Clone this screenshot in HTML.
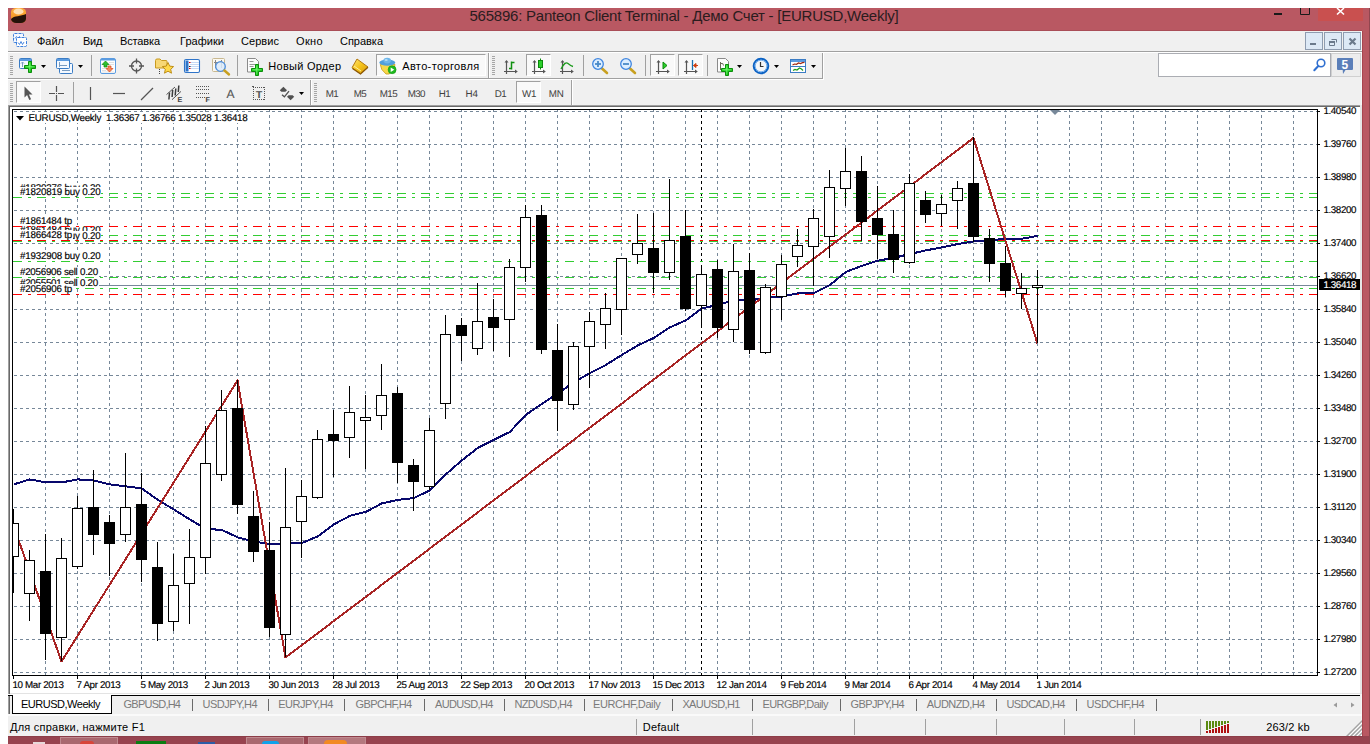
<!DOCTYPE html>
<html lang="ru"><head><meta charset="utf-8"><title>565896: Panteon Client Terminal - Демо Счет - [EURUSD,Weekly]</title><style>
html,body{margin:0;padding:0;background:#fff;}
body{width:1370px;height:744px;position:relative;overflow:hidden;font-family:"Liberation Sans",sans-serif;}
.t{position:absolute;white-space:pre;font-family:"Liberation Sans",sans-serif;}
.r{position:absolute;}
svg{position:absolute;left:0;top:0;}
</style></head>
<body>
<div class="r" style="left:8px;top:8px;width:1362px;height:736px;background:#b95862;"></div>
<div class="r" style="left:8px;top:30px;width:1354px;height:1px;background:#a94d57;"></div>
<div class="r" style="left:8px;top:736px;width:1362px;height:8px;background:#97434f;"></div>
<div class="r" style="left:60px;top:737px;width:58px;height:7px;background:#a9686f;box-sizing:border-box;border:1px solid #c08a90;border-bottom:none;"></div>
<div class="r" style="left:246px;top:737px;width:58px;height:7px;background:#a9686f;box-sizing:border-box;border:1px solid #c08a90;border-bottom:none;"></div>
<div class="r" style="left:308px;top:737px;width:58px;height:7px;background:#b4787e;box-sizing:border-box;border:1px solid #c08a90;border-bottom:none;"></div>
<div class="r" style="left:80px;top:741px;width:14px;height:3px;background:#d8453a;border-radius:6px 6px 0 0;"></div>
<div class="r" style="left:136px;top:741px;width:30px;height:3px;background:#0b7d12;"></div>
<div class="r" style="left:198px;top:742px;width:17px;height:2px;background:#2c5ca6;"></div>
<div class="r" style="left:262px;top:741px;width:17px;height:3px;background:#10a2ea;border-radius:6px 6px 0 0;"></div>
<div class="r" style="left:324px;top:740px;width:23px;height:4px;background:#f28a22;border-radius:9px 9px 0 0;"></div>
<div class="r" style="left:33px;top:742px;width:12px;height:2px;background:#e8d8da;"></div>
<div class="r" style="left:8px;top:31px;width:1354px;height:705px;background:#f0f0f0;"></div>
<div class="r" style="left:1361px;top:31px;width:1px;height:705px;background:#f6f6f6;"></div>
<div class="r" style="left:1362px;top:31px;width:1px;height:706px;background:#a9444f;"></div>
<div class="r" style="left:1369px;top:8px;width:1px;height:736px;background:#90464f;"></div>
<div class="r" style="left:8px;top:736px;width:1355px;height:1px;background:#8c3d48;"></div>
<div class="r" style="left:1318px;top:8px;width:45px;height:13px;background:#c9504f;"></div>
<span class="t" style="left:469.5px;top:7px;font-size:15px;line-height:18px;color:#2b1c1e;letter-spacing:-0.234px;">565896: Panteon Client Terminal - Демо Счет - [EURUSD,Weekly]</span>
<span class="t" style="left:37px;top:34px;font-size:11px;line-height:14px;color:#000;letter-spacing:-0.011px;">Файл</span>
<span class="t" style="left:83px;top:34px;font-size:11px;line-height:14px;color:#000;letter-spacing:-0.300px;">Вид</span>
<span class="t" style="left:120px;top:34px;font-size:11px;line-height:14px;color:#000;letter-spacing:-0.126px;">Вставка</span>
<span class="t" style="left:180px;top:34px;font-size:11px;line-height:14px;color:#000;letter-spacing:0.039px;">Графики</span>
<span class="t" style="left:241px;top:34px;font-size:11px;line-height:14px;color:#000;letter-spacing:0.055px;">Сервис</span>
<span class="t" style="left:296px;top:34px;font-size:11px;line-height:14px;color:#000;letter-spacing:0.360px;">Окно</span>
<span class="t" style="left:340px;top:34px;font-size:11px;line-height:14px;color:#000;letter-spacing:-0.022px;">Справка</span>
<div class="r" style="left:8px;top:51px;width:1354px;height:1px;background:#a0a0a0;"></div>
<div class="r" style="left:8px;top:52px;width:1354px;height:1px;background:#ffffff;"></div>
<div class="r" style="left:8px;top:78px;width:815px;height:1px;background:#a0a0a0;"></div>
<div class="r" style="left:8px;top:79px;width:815px;height:1px;background:#ffffff;"></div>
<div class="r" style="left:822px;top:53px;width:1px;height:26px;background:#a0a0a0;"></div>
<div class="r" style="left:823px;top:53px;width:1px;height:27px;background:#ffffff;"></div>
<div class="r" style="left:488px;top:53px;width:1px;height:25px;background:#a0a0a0;"></div>
<div class="r" style="left:489px;top:53px;width:1px;height:25px;background:#ffffff;"></div>
<div class="r" style="left:310px;top:80px;width:1px;height:25px;background:#a0a0a0;"></div>
<div class="r" style="left:311px;top:80px;width:1px;height:25px;background:#ffffff;"></div>
<div class="r" style="left:571px;top:80px;width:1px;height:25px;background:#a0a0a0;"></div>
<div class="r" style="left:572px;top:80px;width:1px;height:25px;background:#ffffff;"></div>
<div class="r" style="left:10px;top:56px;width:3px;height:1px;background:#a6a6a6;"></div><div class="r" style="left:10px;top:58px;width:3px;height:1px;background:#a6a6a6;"></div><div class="r" style="left:10px;top:60px;width:3px;height:1px;background:#a6a6a6;"></div><div class="r" style="left:10px;top:62px;width:3px;height:1px;background:#a6a6a6;"></div><div class="r" style="left:10px;top:64px;width:3px;height:1px;background:#a6a6a6;"></div><div class="r" style="left:10px;top:66px;width:3px;height:1px;background:#a6a6a6;"></div><div class="r" style="left:10px;top:68px;width:3px;height:1px;background:#a6a6a6;"></div><div class="r" style="left:10px;top:70px;width:3px;height:1px;background:#a6a6a6;"></div><div class="r" style="left:10px;top:72px;width:3px;height:1px;background:#a6a6a6;"></div><div class="r" style="left:10px;top:74px;width:3px;height:1px;background:#a6a6a6;"></div>
<div class="r" style="left:492px;top:56px;width:3px;height:1px;background:#a6a6a6;"></div><div class="r" style="left:492px;top:58px;width:3px;height:1px;background:#a6a6a6;"></div><div class="r" style="left:492px;top:60px;width:3px;height:1px;background:#a6a6a6;"></div><div class="r" style="left:492px;top:62px;width:3px;height:1px;background:#a6a6a6;"></div><div class="r" style="left:492px;top:64px;width:3px;height:1px;background:#a6a6a6;"></div><div class="r" style="left:492px;top:66px;width:3px;height:1px;background:#a6a6a6;"></div><div class="r" style="left:492px;top:68px;width:3px;height:1px;background:#a6a6a6;"></div><div class="r" style="left:492px;top:70px;width:3px;height:1px;background:#a6a6a6;"></div><div class="r" style="left:492px;top:72px;width:3px;height:1px;background:#a6a6a6;"></div><div class="r" style="left:492px;top:74px;width:3px;height:1px;background:#a6a6a6;"></div>
<div class="r" style="left:10px;top:83px;width:3px;height:1px;background:#a6a6a6;"></div><div class="r" style="left:10px;top:85px;width:3px;height:1px;background:#a6a6a6;"></div><div class="r" style="left:10px;top:87px;width:3px;height:1px;background:#a6a6a6;"></div><div class="r" style="left:10px;top:89px;width:3px;height:1px;background:#a6a6a6;"></div><div class="r" style="left:10px;top:91px;width:3px;height:1px;background:#a6a6a6;"></div><div class="r" style="left:10px;top:93px;width:3px;height:1px;background:#a6a6a6;"></div><div class="r" style="left:10px;top:95px;width:3px;height:1px;background:#a6a6a6;"></div><div class="r" style="left:10px;top:97px;width:3px;height:1px;background:#a6a6a6;"></div><div class="r" style="left:10px;top:99px;width:3px;height:1px;background:#a6a6a6;"></div><div class="r" style="left:10px;top:101px;width:3px;height:1px;background:#a6a6a6;"></div>
<div class="r" style="left:314px;top:83px;width:3px;height:1px;background:#a6a6a6;"></div><div class="r" style="left:314px;top:85px;width:3px;height:1px;background:#a6a6a6;"></div><div class="r" style="left:314px;top:87px;width:3px;height:1px;background:#a6a6a6;"></div><div class="r" style="left:314px;top:89px;width:3px;height:1px;background:#a6a6a6;"></div><div class="r" style="left:314px;top:91px;width:3px;height:1px;background:#a6a6a6;"></div><div class="r" style="left:314px;top:93px;width:3px;height:1px;background:#a6a6a6;"></div><div class="r" style="left:314px;top:95px;width:3px;height:1px;background:#a6a6a6;"></div><div class="r" style="left:314px;top:97px;width:3px;height:1px;background:#a6a6a6;"></div><div class="r" style="left:314px;top:99px;width:3px;height:1px;background:#a6a6a6;"></div><div class="r" style="left:314px;top:101px;width:3px;height:1px;background:#a6a6a6;"></div>
<div class="r" style="left:91px;top:55px;width:1px;height:21px;background:#a0a0a0;"></div>
<div class="r" style="left:237px;top:55px;width:1px;height:21px;background:#a0a0a0;"></div>
<div class="r" style="left:583px;top:55px;width:1px;height:21px;background:#a0a0a0;"></div>
<div class="r" style="left:645px;top:55px;width:1px;height:21px;background:#a0a0a0;"></div>
<div class="r" style="left:707px;top:55px;width:1px;height:21px;background:#a0a0a0;"></div>
<div class="r" style="left:73px;top:82px;width:1px;height:21px;background:#a0a0a0;"></div>
<div class="r" style="left:376px;top:54px;width:110px;height:22px;background:#f9f9f9;box-sizing:border-box;border:1px solid #fff;border-top-color:#a0a0a0;border-left-color:#a0a0a0;"></div>
<div class="r" style="left:526px;top:54px;width:25px;height:22px;background:#f9f9f9;box-sizing:border-box;border:1px solid #fff;border-top-color:#a0a0a0;border-left-color:#a0a0a0;"></div>
<div class="r" style="left:650px;top:54px;width:25px;height:22px;background:#f9f9f9;box-sizing:border-box;border:1px solid #fff;border-top-color:#a0a0a0;border-left-color:#a0a0a0;"></div>
<div class="r" style="left:678px;top:54px;width:25px;height:22px;background:#f9f9f9;box-sizing:border-box;border:1px solid #fff;border-top-color:#a0a0a0;border-left-color:#a0a0a0;"></div>
<div class="r" style="left:16px;top:81px;width:25px;height:22px;background:#f9f9f9;box-sizing:border-box;border:1px solid #fff;border-top-color:#a0a0a0;border-left-color:#a0a0a0;"></div>
<div class="r" style="left:516px;top:81px;width:25px;height:22px;background:#f9f9f9;box-sizing:border-box;border:1px solid #fff;border-top-color:#a0a0a0;border-left-color:#a0a0a0;"></div>
<span class="t" style="left:268.3px;top:59px;font-size:11px;line-height:14px;color:#000;letter-spacing:0.265px;">Новый Ордер</span>
<span class="t" style="left:402.2px;top:59px;font-size:11px;line-height:14px;color:#000;letter-spacing:0.366px;">Авто-торговля</span>
<span class="t" style="left:325.7px;top:89px;font-size:9.8px;line-height:12px;color:#404040;letter-spacing:-0.657px;text-rendering:geometricPrecision;">M1</span>
<span class="t" style="left:353.7px;top:89px;font-size:9.8px;line-height:12px;color:#404040;letter-spacing:-0.507px;text-rendering:geometricPrecision;">M5</span>
<span class="t" style="left:379.7px;top:89px;font-size:9.8px;line-height:12px;color:#404040;letter-spacing:-0.521px;text-rendering:geometricPrecision;">M15</span>
<span class="t" style="left:407.7px;top:89px;font-size:9.8px;line-height:12px;color:#404040;letter-spacing:-0.588px;text-rendering:geometricPrecision;">M30</span>
<span class="t" style="left:438.8px;top:89px;font-size:9.8px;line-height:12px;color:#404040;letter-spacing:-0.664px;text-rendering:geometricPrecision;">H1</span>
<span class="t" style="left:465.6px;top:89px;font-size:9.8px;line-height:12px;color:#404040;letter-spacing:-0.064px;text-rendering:geometricPrecision;">H4</span>
<span class="t" style="left:494.7px;top:89px;font-size:9.8px;line-height:12px;color:#404040;letter-spacing:-0.614px;text-rendering:geometricPrecision;">D1</span>
<span class="t" style="left:522px;top:89px;font-size:9.8px;line-height:12px;color:#404040;letter-spacing:-0.350px;text-rendering:geometricPrecision;">W1</span>
<span class="t" style="left:548.8px;top:89px;font-size:9.8px;line-height:12px;color:#404040;letter-spacing:-0.320px;text-rendering:geometricPrecision;">MN</span>
<div class="r" style="left:1158px;top:53px;width:173px;height:24px;background:#fff;box-sizing:border-box;border:1px solid #abadb3;"></div>
<div class="r" style="left:1331px;top:53px;width:30px;height:24px;background:#ededed;box-sizing:border-box;border:1px solid #d0d0d0;"></div>
<div class="r" style="left:1305px;top:32px;width:18px;height:18px;background:#dde9f6;box-sizing:border-box;border:1px solid #8e9cb0;"></div>
<div class="r" style="left:1324px;top:32px;width:18px;height:18px;background:#dde9f6;box-sizing:border-box;border:1px solid #8e9cb0;"></div>
<div class="r" style="left:1343px;top:32px;width:18px;height:18px;background:#dde9f6;box-sizing:border-box;border:1px solid #8e9cb0;"></div>
<div class="r" style="left:8px;top:105px;width:1354px;height:1px;background:#a0a0a0;"></div>
<div class="r" style="left:8px;top:106px;width:1354px;height:1px;background:#696969;"></div>
<div class="r" style="left:8px;top:107px;width:1352px;height:587px;background:#ffffff;"></div>
<div class="r" style="left:1360px;top:105px;width:2px;height:589px;background:#e6e6e6;"></div>
<div class="r" style="left:8px;top:693px;width:1354px;height:1px;background:#e3e3e3;"></div>
<div class="r" style="left:8px;top:105px;width:1px;height:610px;background:#a0a0a0;"></div>
<div class="r" style="left:9px;top:106px;width:1px;height:609px;background:#696969;"></div>
<div class="r" style="left:8px;top:694px;width:1352px;height:1px;background:#fff;"></div>
<div class="r" style="left:8px;top:714px;width:1354px;height:2px;background:#fafafa;"></div>
<div class="r" style="left:8px;top:695px;width:1352px;height:1px;background:#000;"></div>
<div class="r" style="left:12px;top:695px;width:100px;height:19px;background:#fff;border:1px solid #000;border-top:none;box-sizing:border-box;"></div>
<span class="t" style="left:21px;top:697px;font-size:11px;line-height:14px;color:#000;letter-spacing:-0.490px;">EURUSD,Weekly</span>
<span class="t" style="left:123.6px;top:697px;font-size:11px;line-height:14px;color:#7a7a7a;letter-spacing:-0.775px;">GBPUSD,H4</span>
<span class="t" style="left:202.5px;top:697px;font-size:11px;line-height:14px;color:#7a7a7a;letter-spacing:-0.511px;">USDJPY,H4</span>
<span class="t" style="left:278.2px;top:697px;font-size:11px;line-height:14px;color:#7a7a7a;letter-spacing:-0.500px;">EURJPY,H4</span>
<span class="t" style="left:355.6px;top:697px;font-size:11px;line-height:14px;color:#7a7a7a;letter-spacing:-0.648px;">GBPCHF,H4</span>
<span class="t" style="left:435px;top:697px;font-size:11px;line-height:14px;color:#7a7a7a;letter-spacing:-0.641px;">AUDUSD,H4</span>
<span class="t" style="left:514.4px;top:697px;font-size:11px;line-height:14px;color:#7a7a7a;letter-spacing:-0.594px;">NZDUSD,H4</span>
<span class="t" style="left:593px;top:697px;font-size:11px;line-height:14px;color:#7a7a7a;letter-spacing:-0.402px;">EURCHF,Daily</span>
<span class="t" style="left:682.4px;top:697px;font-size:11px;line-height:14px;color:#7a7a7a;letter-spacing:-0.618px;">XAUUSD,H1</span>
<span class="t" style="left:762.5px;top:697px;font-size:11px;line-height:14px;color:#7a7a7a;letter-spacing:-0.604px;">EURGBP,Daily</span>
<span class="t" style="left:850.6px;top:697px;font-size:11px;line-height:14px;color:#7a7a7a;letter-spacing:-0.634px;">GBPJPY,H4</span>
<span class="t" style="left:926.8px;top:697px;font-size:11px;line-height:14px;color:#7a7a7a;letter-spacing:-0.572px;">AUDNZD,H4</span>
<span class="t" style="left:1006.5px;top:697px;font-size:11px;line-height:14px;color:#7a7a7a;letter-spacing:-0.585px;">USDCAD,H4</span>
<span class="t" style="left:1086.6px;top:697px;font-size:11px;line-height:14px;color:#7a7a7a;letter-spacing:-0.459px;">USDCHF,H4</span>
<div class="r" style="left:192px;top:699px;width:1px;height:12px;background:#6a6a6a;"></div>
<div class="r" style="left:268px;top:699px;width:1px;height:12px;background:#6a6a6a;"></div>
<div class="r" style="left:344px;top:699px;width:1px;height:12px;background:#6a6a6a;"></div>
<div class="r" style="left:424px;top:699px;width:1px;height:12px;background:#6a6a6a;"></div>
<div class="r" style="left:504px;top:699px;width:1px;height:12px;background:#6a6a6a;"></div>
<div class="r" style="left:584px;top:699px;width:1px;height:12px;background:#6a6a6a;"></div>
<div class="r" style="left:672px;top:699px;width:1px;height:12px;background:#6a6a6a;"></div>
<div class="r" style="left:752px;top:699px;width:1px;height:12px;background:#6a6a6a;"></div>
<div class="r" style="left:840px;top:699px;width:1px;height:12px;background:#6a6a6a;"></div>
<div class="r" style="left:916px;top:699px;width:1px;height:12px;background:#6a6a6a;"></div>
<div class="r" style="left:996px;top:699px;width:1px;height:12px;background:#6a6a6a;"></div>
<div class="r" style="left:1076px;top:699px;width:1px;height:12px;background:#6a6a6a;"></div>
<div class="r" style="left:1156px;top:699px;width:1px;height:12px;background:#6a6a6a;"></div>
<span class="t" style="left:10px;top:720px;font-size:11px;line-height:14px;color:#000;letter-spacing:0.232px;">Для справки, нажмите F1</span>
<span class="t" style="left:642.7px;top:720px;font-size:11px;line-height:14px;color:#000;letter-spacing:0.264px;">Default</span>
<span class="t" style="left:1266.3px;top:720px;font-size:11px;line-height:14px;color:#000;letter-spacing:0.150px;">263/2 kb</span>
<div class="r" style="left:636px;top:719px;width:1px;height:16px;background:#a0a0a0;"></div>
<div class="r" style="left:752px;top:719px;width:1px;height:16px;background:#a0a0a0;"></div>
<div class="r" style="left:854px;top:719px;width:1px;height:16px;background:#a0a0a0;"></div>
<div class="r" style="left:925px;top:719px;width:1px;height:16px;background:#a0a0a0;"></div>
<div class="r" style="left:996px;top:719px;width:1px;height:16px;background:#a0a0a0;"></div>
<div class="r" style="left:1064px;top:719px;width:1px;height:16px;background:#a0a0a0;"></div>
<div class="r" style="left:1134px;top:719px;width:1px;height:16px;background:#a0a0a0;"></div>
<div class="r" style="left:1200px;top:719px;width:1px;height:16px;background:#a0a0a0;"></div>
<svg width="1370" height="744" viewBox="0 0 1370 744" fill="none"><rect x="1274" y="13" width="8" height="2" fill="#1a1a1a"/><path d="M1300.5 8V14.5H1309.5V8" stroke="#1a1a1a" fill="none"/><path d="M1337 8L1344 14.5M1344 8L1337 14.5" stroke="#fff" stroke-width="1.6" fill="none"/><rect x="1310" y="43" width="6" height="2" fill="#6b7a8c"/><path d="M1331.5 39.5h5v3M1329.5 41.5h5v4h-5z" stroke="#6b7a8c" fill="none"/><rect x="1329" y="41" width="6" height="2" fill="#6b7a8c"/><path d="M1349.5 38.500l6 6M1355.5 38.500l-6 6" stroke="#6b7a8c" stroke-width="2.200" fill="none"/><defs><radialGradient id="pg" cx=".45" cy=".4" r=".7"><stop offset="0" stop-color="#48ee48"/><stop offset="1" stop-color="#0fb00f"/></radialGradient></defs><defs><linearGradient id="og" x1="0" y1="0" x2="0" y2="1"><stop offset="0" stop-color="#ffb13d"/><stop offset="1" stop-color="#f08a1c"/></linearGradient><clipPath id="ai"><rect x="11" y="8" width="15" height="15" rx="5" ry="4"/></clipPath></defs><g clip-path="url(#ai)"><rect x="11" y="8" width="15" height="15" fill="url(#og)"/><ellipse cx="18.5" cy="11.5" rx="5" ry="3" fill="#ffe1b5"/><path d="M11 19 C14 15.5 21 16.5 26 14 V24 H11Z" fill="#24120a"/></g><rect x="13.500" y="33.500" width="10" height="9" rx="1" fill="#f4f8ff" stroke="#3c7fdc" stroke-dasharray="3 1"/><path d="M15 38.500l1.500-2 1.500 2 1.500-2 1.500 2" stroke="#3c7fdc" fill="none" stroke-width=".9"/><rect x="16.500" y="37.500" width="10" height="9" rx="1" fill="#fff" stroke="#3c7fdc" stroke-dasharray="3 1"/><path d="M18 42.500l1.500 2 1.500-3 1.500 3 1.500-2.500" stroke="#3c7fdc" fill="none" stroke-width=".9"/><rect x="19.5" y="58.5" width="12" height="10" rx="1" fill="#f4f9ff" stroke="#3b7cc4"/><rect x="20" y="59" width="11" height="2" fill="#5b9be0"/><path d="M22.5 62v5M21 63.5l1.5-1.5 1.5 1.5" stroke="#7a9cc0" fill="none"/><path d="M28.5 61.5h3v4h4v3h-4v4h-3v-4h-4v-3h4z" fill="url(#pg)" stroke="#0b8f0b" stroke-width="1"/><path d="M29.5 62.5v9M25.5 66.5h9" stroke="#8dff8d" stroke-opacity=".35" stroke-width="1"/><path d="M41 65h5l-2.5 3z" fill="#000"/><rect x="59.5" y="63.5" width="13" height="10" rx="1" fill="#f4f9ff" stroke="#3b7cc4"/><rect x="56.5" y="58.5" width="13" height="10" rx="1" fill="#f4f9ff" stroke="#3b7cc4"/><rect x="57" y="59" width="12" height="2" fill="#5b9be0"/><path d="M59.500 62v5M59 65.500h8M62 70.500h8" stroke="#7a9cc0" fill="none"/><path d="M78 65h5l-2.5 3z" fill="#000"/><rect x="100.500" y="58.500" width="15" height="15" rx="1.500" fill="#fdfeff" stroke="#5b9be0"/><rect x="101" y="59" width="14" height="1.500" fill="#5b9be0"/><path d="M109 62.500h5M109 64.500h5M102 68.500h4M102 70.500h4M102 72h12" stroke="#e0e0e0"/><path d="M105.500 61l3.500 3.500h-2v2.500h-3v-2.500h-2z" fill="#2fc02f" stroke="#0c8a0c" stroke-width=".7"/><path d="M109.500 72l3.500-3.500h-2v-2.500h-3v2.500h-2z" fill="#f58a60" stroke="#d84818" stroke-width=".7"/><circle cx="136.500" cy="66" r="5" fill="none" stroke="#555" stroke-width="1.3"/><path d="M129 66h5M139 66h5M136.500 58.500v5M136.500 68.500v5" stroke="#555" stroke-width="1.3"/><path d="M155.500 60.500q0-1.500 1.500-1.500h3l1.500 1.500h4.500q1 0 1 1v6.500h-11.500z" fill="#f7d774" stroke="#c99a1e"/><path d="M168 62.500l1.700 3.600 3.900.5-2.900 2.700.8 3.900-3.500-2-3.500 2 .8-3.900-2.900-2.700 3.900-.5z" fill="#ffd94a" stroke="#b8860b" stroke-width=".9"/><path d="M159.500 69v5" stroke="#444" stroke-dasharray="1 1"/><rect x="184.500" y="59.500" width="15" height="13" rx="1.500" fill="#fff" stroke="#2f74c8" stroke-width="1.100"/><rect x="185.500" y="60.500" width="3" height="11" fill="#2f74c8"/><path d="M190 62.500h9M190 64.500h9M190 66.500h9M190 68.500h9" stroke="#c5d9f5"/><rect x="189" y="62" width="1.500" height="1" fill="#e00"/><rect x="189" y="66" width="1.500" height="1" fill="#222"/><rect x="189" y="68" width="1.500" height="1" fill="#e00"/><rect x="212.500" y="58.500" width="12" height="13" rx="1" fill="#fbf8f0" stroke="#c8b890"/><path d="M215.500 60v8M221.500 60v8M214 62.500h9" stroke="#888" fill="none"/><circle cx="220.500" cy="66.500" r="4.800" fill="#dcebfa" fill-opacity=".85" stroke="#4f8fdc" stroke-width="1.300"/><path d="M224.500 70.500l4.500 4" stroke="#c8a020" stroke-width="2.400" stroke-linecap="round"/><path d="M247.500 58.500h8l3 3v10.500h-11z" fill="#fcfcfc" stroke="#8a8a8a"/><path d="M249.500 61.500h4M249.500 64.500h6M249.500 66.500h4" stroke="#999"/><path d="M255.5 64.5h3v4h4v3h-4v4h-3v-4h-4v-3h4z" fill="url(#pg)" stroke="#0b8f0b" stroke-width="1"/><path d="M256.5 65.5v9M252.5 69.5h9" stroke="#8dff8d" stroke-opacity=".35" stroke-width="1"/><defs><linearGradient id="bk" x1="0" y1="0" x2="1" y2="1"><stop offset="0" stop-color="#ffe779"/><stop offset=".5" stop-color="#f4c21a"/><stop offset="1" stop-color="#d89a0c"/></linearGradient></defs><path d="M357 59l11 8-7.500 6.700-8.500-6z" fill="url(#bk)" stroke="#b3780e" stroke-width="1"/><path d="M352.500 68.500l8 5.500 7.500-6.700" stroke="#8f5a06" fill="none" stroke-width="1.300"/><path d="M354 66l7 5" stroke="#ffef9a" fill="none" stroke-width="1"/><path d="M380.300 64.500h14.700l-1.500 6-4.500 3.500h-3l-4.200-4.500z" fill="#f6d84a" stroke="#c89a18" stroke-width=".8"/><ellipse cx="387.300" cy="62.600" rx="8" ry="3.100" fill="#4f9fdc"/><ellipse cx="387.200" cy="60.600" rx="3.800" ry="2.800" fill="#6db6ea"/><ellipse cx="386.200" cy="60" rx="1.600" ry="1" fill="#b5dcf7"/><circle cx="392.100" cy="69.700" r="4" fill="#1fb81f" stroke="#0f9a0f" stroke-width=".6"/><path d="M390.700 67.400l3.600 2.300-3.600 2.300z" fill="#fff"/><path d="M506.5 61v13M504 71.5h13" stroke="#555" stroke-width="1.200" fill="none"/><path d="M504.5 62.5l2-2.500 2 2.500zM515 69.5l2.800 2-2.800 2z" fill="#555"/><path d="M511.500 61.500v8M511.500 62.500h3M509 68.500h2.500" stroke="#0f900f" stroke-width="1.500" fill="none"/><path d="M534.5 61v13M532 71.5h13" stroke="#555" stroke-width="1.200" fill="none"/><path d="M532.5 62.5l2-2.500 2 2.500zM543 69.5l2.800 2-2.800 2z" fill="#555"/><path d="M540.500 58.500v11" stroke="#0c8a0c"/><rect x="538.500" y="60.500" width="4" height="7" fill="#2bd02b" stroke="#0c8a0c"/><path d="M562.5 61v13M560 71.5h13" stroke="#555" stroke-width="1.200" fill="none"/><path d="M560.5 62.5l2-2.500 2 2.500zM571 69.5l2.800 2-2.800 2z" fill="#555"/><path d="M561 69q4-8 7-5.500t5 3" stroke="#1a9a1a" stroke-width="1.300" fill="none"/><path d="M602 68.5l5 4.500" stroke="#c8a020" stroke-width="2.600" stroke-linecap="round"/><circle cx="598" cy="64" r="5.300" fill="#ddeeff" stroke="#3f86e0" stroke-width="1.300"/><path d="M595 64h6" stroke="#4a8ac8" stroke-width="1.800"/><path d="M598 61v6" stroke="#4a8ac8" stroke-width="1.800"/><path d="M630 68.5l5 4.500" stroke="#c8a020" stroke-width="2.600" stroke-linecap="round"/><circle cx="626" cy="64" r="5.300" fill="#ddeeff" stroke="#3f86e0" stroke-width="1.300"/><path d="M623 64h6" stroke="#4a8ac8" stroke-width="1.800"/><path d="M658.5 61v13M656 71.5h13" stroke="#555" stroke-width="1.200" fill="none"/><path d="M656.5 62.5l2-2.500 2 2.500zM667 69.5l2.800 2-2.800 2z" fill="#555"/><path d="M663 62l4 3.500-4 3.500z" fill="#2bd02b" stroke="#0c8a0c"/><path d="M686.5 61v13M684 71.5h13" stroke="#555" stroke-width="1.200" fill="none"/><path d="M684.5 62.5l2-2.500 2 2.500zM695 69.5l2.800 2-2.800 2z" fill="#555"/><path d="M692.500 60v10" stroke="#1a70b0" stroke-width="1.300"/><path d="M698 65.500h-4.500M696 63.500l-2.500 2 2.500 2z" stroke="#d04010" fill="#d04010" stroke-width="1"/><path d="M717.500 58.500h8l3 3v10.500h-11z" fill="#fcfcfc" stroke="#8a8a8a"/><path d="M720.500 62v8M720.500 63.500q3-1 3 2" stroke="#6a6a5a" fill="none"/><path d="M725.5 64.5h3v4h4v3h-4v4h-3v-4h-4v-3h4z" fill="url(#pg)" stroke="#0b8f0b" stroke-width="1"/><path d="M726.5 65.5v9M722.5 69.5h9" stroke="#8dff8d" stroke-opacity=".35" stroke-width="1"/><path d="M737 65h5l-2.5 3z" fill="#000"/><circle cx="761" cy="66" r="7.300" fill="#f4f6f8" stroke="#0b62c4" stroke-width="2"/><circle cx="761" cy="66" r="5.800" fill="none" stroke="#57a0ee" stroke-width=".8"/><path d="M760.500 62v4.500h3" stroke="#333" fill="none" stroke-width="1.200"/><path d="M774 65h5l-2.5 3z" fill="#000"/><rect x="790.500" y="59.500" width="15" height="13" fill="#fff" stroke="#3b7cc4"/><rect x="791" y="60" width="14" height="2" fill="#5b9be0"/><path d="M791 66.500h14" stroke="#3b7cc4"/><path d="M792.500 65l2-1 2 .3 2-1.300 2 .6 2-1 2-.3" stroke="#a02810" fill="none" stroke-width="1.200"/><path d="M793 70.500l2-1 2 .5 2.500-2 2 1 1.500 1.500" stroke="#1a9a1a" fill="none" stroke-width="1.200"/><path d="M811 65h5l-2.5 3z" fill="#000"/><circle cx="1321" cy="63" r="3.800" fill="none" stroke="#2f6fd0" stroke-width="1.600"/><path d="M1318.300 66l-4 4.300" stroke="#2f6fd0" stroke-width="2" stroke-linecap="round"/><path d="M1338 58h14q1 0 1 1v10q0 1-1 1h-6.500l-2.500 4-.300-4h-4.700q-1 0-1-1v-10q0-1 1-1z" fill="#5b7fb9"/><path d="M24.500 86.500v11l2.600-2.500 2.200 5 1.800-.800-2.200-4.800h3.600z" fill="#555"/><path d="M49 93.500h6M58 93.500h6M56.500 86v6M56.500 95v6" stroke="#555" stroke-width="1.200"/><rect x="56" y="93" width="1" height="1" fill="#555"/><path d="M90.500 87v13" stroke="#555" stroke-width="1.200"/><path d="M113 93.500h12" stroke="#555" stroke-width="1.200"/><path d="M141 100l12-12" stroke="#555" stroke-width="1.200"/><path d="M166.500 94.600l8.500-7.600M172 99.700l9-8.300" stroke="#555" fill="none" stroke-width="1"/><path d="M169.500 92.500l-.6 7M172.700 90l-.6 7M175.800 88.500l-.6 7M178.800 85.500l-.5 6.500" stroke="#3c3c3c" fill="none" stroke-width="1.500"/><path d="M196 86.5h13" stroke="#555" stroke-dasharray="1 1"/><path d="M196 89.5h13" stroke="#555" stroke-dasharray="1 1"/><path d="M196 93.5h13" stroke="#555" stroke-dasharray="1 1"/><path d="M196 97.5h9" stroke="#555" stroke-dasharray="1 1"/><g shape-rendering="crispEdges"><path d="M253 87.500h12M253 99.500h12M253.500 87v13M264.500 87v13" stroke="#555" stroke-dasharray="1 1"/><rect x="252" y="86" width="2" height="1" fill="#555"/></g><path d="M283.400 86.800l3.600 3.400-1.600 1.600h-4l-1.600-1.600z" fill="#505050"/><path d="M290.600 100.200l3.600-3.400-1.600-1.600h-4l-1.600 1.600z" fill="#505050"/><path d="M282 94.800l2.400 2 4.600-5.600" stroke="#505050" fill="none" stroke-width="1.300"/><path d="M299 92h5l-2.5 3z" fill="#000"/><path d="M1337 702.500v5l-3.500-2.500zM1351 702.500v5l3.500-2.500z" fill="#9a9a9a"/><rect x="1206" y="731" width="2" height="2" fill="#b01010"/><rect x="1206" y="721" width="2" height="9" fill="#5a8a10"/><rect x="1209" y="730" width="2" height="3" fill="#b01010"/><rect x="1209" y="721" width="2" height="8" fill="#5a8a10"/><rect x="1212" y="729" width="2" height="4" fill="#b01010"/><rect x="1212" y="721" width="2" height="7" fill="#5a8a10"/><rect x="1215" y="728" width="2" height="5" fill="#b01010"/><rect x="1215" y="721" width="2" height="6" fill="#5a8a10"/><rect x="1218" y="727" width="2" height="6" fill="#b01010"/><rect x="1218" y="721" width="2" height="5" fill="#5a8a10"/><rect x="1221" y="726" width="2" height="7" fill="#b01010"/><rect x="1221" y="721" width="2" height="4" fill="#5a8a10"/><rect x="1224" y="725" width="2" height="8" fill="#b01010"/><rect x="1224" y="721" width="2" height="3" fill="#5a8a10"/><rect x="1227" y="724" width="2" height="9" fill="#b01010"/><rect x="1227" y="721" width="2" height="2" fill="#5a8a10"/><clipPath id="rg"><rect x="1346" y="718" width="16" height="18"/></clipPath><g clip-path="url(#rg)"><path d="M1348 737L1363 722" stroke="#fff" stroke-width="1.500"/><path d="M1352 737L1363 726" stroke="#fff" stroke-width="1.500"/><path d="M1356 737L1363 730" stroke="#fff" stroke-width="1.500"/><path d="M1360 737L1363 734" stroke="#fff" stroke-width="1.500"/><path d="M1346 737L1363 720" stroke="#a3a3a3" stroke-width="1.500"/><path d="M1350 737L1363 724" stroke="#a3a3a3" stroke-width="1.500"/><path d="M1354 737L1363 728" stroke="#a3a3a3" stroke-width="1.500"/><path d="M1358 737L1363 732" stroke="#a3a3a3" stroke-width="1.500"/></g></svg>
<span class="t" style="left:177.5px;top:96px;font-size:7px;line-height:9px;color:#444;font-weight:bold;text-rendering:geometricPrecision;-webkit-text-stroke:0.15px #444;">E</span>
<span class="t" style="left:205.5px;top:96px;font-size:7px;line-height:9px;color:#444;font-weight:bold;text-rendering:geometricPrecision;-webkit-text-stroke:0.15px #444;">F</span>
<span class="t" style="left:226.5px;top:87px;font-size:12px;line-height:15px;color:#555;text-rendering:geometricPrecision;-webkit-text-stroke:0.15px #555;">A</span>
<span class="t" style="left:256px;top:90px;font-size:10px;line-height:12px;color:#555;font-weight:bold;text-rendering:geometricPrecision;-webkit-text-stroke:0.15px #555;">T</span>
<span class="t" style="left:1341.5px;top:58px;font-size:12px;line-height:15px;color:#fff;font-weight:bold;">5</span>
<svg width="1370" height="744" viewBox="0 0 1370 744" shape-rendering="crispEdges" fill="none"><path d="M14 111.5H1317" stroke="#778899" stroke-dasharray="3 3" stroke-dashoffset="0"/><path d="M14 144.5H1317" stroke="#778899" stroke-dasharray="3 3" stroke-dashoffset="0"/><path d="M14 177.5H1317" stroke="#778899" stroke-dasharray="3 3" stroke-dashoffset="0"/><path d="M14 210.5H1317" stroke="#778899" stroke-dasharray="3 3" stroke-dashoffset="0"/><path d="M14 243.5H1317" stroke="#778899" stroke-dasharray="3 3" stroke-dashoffset="0"/><path d="M14 276.5H1317" stroke="#778899" stroke-dasharray="3 3" stroke-dashoffset="0"/><path d="M14 309.5H1317" stroke="#778899" stroke-dasharray="3 3" stroke-dashoffset="0"/><path d="M14 342.5H1317" stroke="#778899" stroke-dasharray="3 3" stroke-dashoffset="0"/><path d="M14 375.5H1317" stroke="#778899" stroke-dasharray="3 3" stroke-dashoffset="0"/><path d="M14 408.5H1317" stroke="#778899" stroke-dasharray="3 3" stroke-dashoffset="0"/><path d="M14 441.5H1317" stroke="#778899" stroke-dasharray="3 3" stroke-dashoffset="0"/><path d="M14 474.5H1317" stroke="#778899" stroke-dasharray="3 3" stroke-dashoffset="0"/><path d="M14 507.5H1317" stroke="#778899" stroke-dasharray="3 3" stroke-dashoffset="0"/><path d="M14 540.5H1317" stroke="#778899" stroke-dasharray="3 3" stroke-dashoffset="0"/><path d="M14 573.5H1317" stroke="#778899" stroke-dasharray="3 3" stroke-dashoffset="0"/><path d="M14 606.5H1317" stroke="#778899" stroke-dasharray="3 3" stroke-dashoffset="0"/><path d="M14 639.5H1317" stroke="#778899" stroke-dasharray="3 3" stroke-dashoffset="0"/><path d="M14 672.5H1317" stroke="#778899" stroke-dasharray="3 3" stroke-dashoffset="0"/><path d="M45.5 109V675" stroke="#778899" stroke-dasharray="3 3"/><path d="M77.5 109V675" stroke="#778899" stroke-dasharray="3 3"/><path d="M109.5 109V675" stroke="#778899" stroke-dasharray="3 3"/><path d="M141.5 109V675" stroke="#778899" stroke-dasharray="3 3"/><path d="M173.5 109V675" stroke="#778899" stroke-dasharray="3 3"/><path d="M205.5 109V675" stroke="#778899" stroke-dasharray="3 3"/><path d="M237.5 109V675" stroke="#778899" stroke-dasharray="3 3"/><path d="M269.5 109V675" stroke="#778899" stroke-dasharray="3 3"/><path d="M301.5 109V675" stroke="#778899" stroke-dasharray="3 3"/><path d="M333.5 109V675" stroke="#778899" stroke-dasharray="3 3"/><path d="M365.5 109V675" stroke="#778899" stroke-dasharray="3 3"/><path d="M397.5 109V675" stroke="#778899" stroke-dasharray="3 3"/><path d="M429.5 109V675" stroke="#778899" stroke-dasharray="3 3"/><path d="M461.5 109V675" stroke="#778899" stroke-dasharray="3 3"/><path d="M493.5 109V675" stroke="#778899" stroke-dasharray="3 3"/><path d="M525.5 109V675" stroke="#778899" stroke-dasharray="3 3"/><path d="M557.5 109V675" stroke="#778899" stroke-dasharray="3 3"/><path d="M589.5 109V675" stroke="#778899" stroke-dasharray="3 3"/><path d="M621.5 109V675" stroke="#778899" stroke-dasharray="3 3"/><path d="M653.5 109V675" stroke="#778899" stroke-dasharray="3 3"/><path d="M685.5 109V675" stroke="#778899" stroke-dasharray="3 3"/><path d="M717.5 109V675" stroke="#778899" stroke-dasharray="3 3"/><path d="M749.5 109V675" stroke="#778899" stroke-dasharray="3 3"/><path d="M781.5 109V675" stroke="#778899" stroke-dasharray="3 3"/><path d="M813.5 109V675" stroke="#778899" stroke-dasharray="3 3"/><path d="M845.5 109V675" stroke="#778899" stroke-dasharray="3 3"/><path d="M877.5 109V675" stroke="#778899" stroke-dasharray="3 3"/><path d="M909.5 109V675" stroke="#778899" stroke-dasharray="3 3"/><path d="M941.5 109V675" stroke="#778899" stroke-dasharray="3 3"/><path d="M973.5 109V675" stroke="#778899" stroke-dasharray="3 3"/><path d="M1005.5 109V675" stroke="#778899" stroke-dasharray="3 3"/><path d="M1037.5 109V675" stroke="#778899" stroke-dasharray="3 3"/><path d="M1069.5 109V675" stroke="#778899" stroke-dasharray="3 3"/><path d="M1101.5 109V675" stroke="#778899" stroke-dasharray="3 3"/><path d="M1133.5 109V675" stroke="#778899" stroke-dasharray="3 3"/><path d="M1165.5 109V675" stroke="#778899" stroke-dasharray="3 3"/><path d="M1197.5 109V675" stroke="#778899" stroke-dasharray="3 3"/><path d="M1229.5 109V675" stroke="#778899" stroke-dasharray="3 3"/><path d="M1261.5 109V675" stroke="#778899" stroke-dasharray="3 3"/><path d="M1293.5 109V675" stroke="#778899" stroke-dasharray="3 3"/><path d="M701.5 109V675" stroke="#000" stroke-dasharray="3 3"/><path d="M1050 110H1060L1055 115Z" fill="#778899" shape-rendering="auto"/><path d="M13 193.5H1317" stroke="#32cd32" stroke-dasharray="9 6 3 6" stroke-dashoffset="0"/><path d="M13 197.5H1317" stroke="#32cd32" stroke-dasharray="9 6 3 6" stroke-dashoffset="0"/><path d="M13 226.5H1317" stroke="#ff0000" stroke-dasharray="9 6 3 6" stroke-dashoffset="0"/><path d="M13 235.5H1317" stroke="#32cd32" stroke-dasharray="9 6 3 6" stroke-dashoffset="0"/><path d="M13 241.5H1317" stroke="#32cd32" stroke-dasharray="9 6 3 6" stroke-dashoffset="0"/><path d="M13 240.5H1317" stroke="#ff0000" stroke-dasharray="9 6 3 6" stroke-dashoffset="0"/><path d="M13 261.5H1317" stroke="#32cd32" stroke-dasharray="9 6 3 6" stroke-dashoffset="0"/><path d="M13 277.5H1317" stroke="#32cd32" stroke-dasharray="9 6 3 6" stroke-dashoffset="0"/><path d="M13 288.5H1317" stroke="#32cd32" stroke-dasharray="9 6 3 6" stroke-dashoffset="0"/><path d="M13 294.5H1317" stroke="#ff0000" stroke-dasharray="9 6 3 6" stroke-dashoffset="0"/><path d="M13 285.5H1317" stroke="#778899"/><clipPath id="cp"><rect x="13" y="110" width="1304" height="565"/></clipPath><g clip-path="url(#cp)"><polyline points="13.5,484 29.5,479 45.5,482 61.5,482 77.5,479 93.5,480 109.5,484 125.5,486 141.5,488 157.5,499.5 173.5,509 189.5,519 205.5,528.5 221.5,529.5 237.5,537 253.5,541 269.5,544 285.5,543 301.5,542.6 317.5,536 333.5,524 349.5,515.5 365.5,511.5 381.5,503 397.5,499.5 413.5,497.7 429.5,490 445.5,474 461.5,460 477.5,447.5 493.5,439.5 509.5,431.6 525.5,414.5 541.5,403.5 557.5,393 573.5,382 589.5,372.7 605.5,364.6 621.5,354.5 637.5,345 653.5,337.5 669.5,327 685.5,320 701.5,308 717.5,304.5 733.5,300 749.5,300 765.5,297.5 781.5,296.3 797.5,292.9 813.5,292.8 829.5,284.8 845.5,271.6 861.5,265.4 877.5,260.3 893.5,257.5 909.5,253.6 925.5,250 941.5,247 957.5,243.6 973.5,241 989.5,239.6 1005.5,238.6 1021.5,238.4 1037.5,235.4" stroke="#08086c" stroke-width="2" stroke-linejoin="round" transform="translate(0.3,0.4)"/><polyline points="0,487 61.5,661 237.5,380 285.5,657 973.5,137.5 1037.5,343" stroke="#a82424" stroke-width="2" stroke-linejoin="round" transform="translate(0,0.5)"/><rect x="13" y="509" width="1" height="84" fill="#000"/><rect x="8.5" y="523.5" width="10" height="33" fill="#fff" stroke="#000"/><rect x="29" y="550" width="1" height="71" fill="#000"/><rect x="24.5" y="560.5" width="10" height="33" fill="#fff" stroke="#000"/><rect x="45" y="534" width="1" height="126" fill="#000"/><rect x="40" y="571" width="11" height="63" fill="#000"/><rect x="61" y="538" width="1" height="123" fill="#000"/><rect x="56.5" y="558.5" width="10" height="79" fill="#fff" stroke="#000"/><rect x="77" y="496" width="1" height="73" fill="#000"/><rect x="72.5" y="508.5" width="10" height="58" fill="#fff" stroke="#000"/><rect x="93" y="470" width="1" height="85" fill="#000"/><rect x="88" y="507" width="11" height="28" fill="#000"/><rect x="109" y="515" width="1" height="61" fill="#000"/><rect x="104" y="522" width="11" height="22" fill="#000"/><rect x="125" y="453" width="1" height="89" fill="#000"/><rect x="120.5" y="507.5" width="10" height="27" fill="#fff" stroke="#000"/><rect x="141" y="473" width="1" height="109" fill="#000"/><rect x="136" y="504" width="11" height="56" fill="#000"/><rect x="157" y="542" width="1" height="99" fill="#000"/><rect x="152" y="567" width="11" height="57" fill="#000"/><rect x="173" y="554" width="1" height="77" fill="#000"/><rect x="168.5" y="585.5" width="10" height="36" fill="#fff" stroke="#000"/><rect x="189" y="529" width="1" height="95" fill="#000"/><rect x="184.5" y="557.5" width="10" height="26" fill="#fff" stroke="#000"/><rect x="205" y="426" width="1" height="148" fill="#000"/><rect x="200.5" y="463.5" width="10" height="94" fill="#fff" stroke="#000"/><rect x="221" y="390" width="1" height="91" fill="#000"/><rect x="216.5" y="410.5" width="10" height="64" fill="#fff" stroke="#000"/><rect x="237" y="380" width="1" height="134" fill="#000"/><rect x="232" y="408" width="11" height="97" fill="#000"/><rect x="253" y="491" width="1" height="71" fill="#000"/><rect x="248" y="516" width="11" height="36" fill="#000"/><rect x="269" y="522" width="1" height="115" fill="#000"/><rect x="264" y="550" width="11" height="78" fill="#000"/><rect x="285" y="468" width="1" height="189" fill="#000"/><rect x="280.5" y="527.5" width="10" height="107" fill="#fff" stroke="#000"/><rect x="301" y="480" width="1" height="78" fill="#000"/><rect x="296.5" y="496.5" width="10" height="25" fill="#fff" stroke="#000"/><rect x="317" y="430" width="1" height="69" fill="#000"/><rect x="312.5" y="439.5" width="10" height="58" fill="#fff" stroke="#000"/><rect x="333" y="410" width="1" height="67" fill="#000"/><rect x="328" y="434" width="11" height="7" fill="#000"/><rect x="349" y="386" width="1" height="72" fill="#000"/><rect x="344.5" y="412.5" width="10" height="25" fill="#fff" stroke="#000"/><rect x="365" y="395" width="1" height="74" fill="#000"/><rect x="360.5" y="417.5" width="10" height="3" fill="#fff" stroke="#000"/><rect x="381" y="364" width="1" height="66" fill="#000"/><rect x="376.5" y="395.5" width="10" height="20" fill="#fff" stroke="#000"/><rect x="397" y="387" width="1" height="96" fill="#000"/><rect x="392" y="393" width="11" height="70" fill="#000"/><rect x="413" y="459" width="1" height="52" fill="#000"/><rect x="408" y="465" width="11" height="17" fill="#000"/><rect x="429" y="418" width="1" height="72" fill="#000"/><rect x="424.5" y="430.5" width="10" height="56" fill="#fff" stroke="#000"/><rect x="445" y="315" width="1" height="104" fill="#000"/><rect x="440.5" y="334.5" width="10" height="69" fill="#fff" stroke="#000"/><rect x="461" y="318" width="1" height="43" fill="#000"/><rect x="456" y="325" width="11" height="11" fill="#000"/><rect x="477" y="283" width="1" height="72" fill="#000"/><rect x="472.5" y="321.5" width="10" height="27" fill="#fff" stroke="#000"/><rect x="493" y="299" width="1" height="52" fill="#000"/><rect x="488" y="317" width="11" height="11" fill="#000"/><rect x="509" y="259" width="1" height="98" fill="#000"/><rect x="504.5" y="267.5" width="10" height="52" fill="#fff" stroke="#000"/><rect x="525" y="205" width="1" height="77" fill="#000"/><rect x="520.5" y="217.5" width="10" height="50" fill="#fff" stroke="#000"/><rect x="541" y="205" width="1" height="149" fill="#000"/><rect x="536" y="215" width="11" height="135" fill="#000"/><rect x="557" y="324" width="1" height="107" fill="#000"/><rect x="552" y="350" width="11" height="51" fill="#000"/><rect x="573" y="342" width="1" height="68" fill="#000"/><rect x="568.5" y="346.5" width="10" height="58" fill="#fff" stroke="#000"/><rect x="589" y="312" width="1" height="76" fill="#000"/><rect x="584.5" y="321.5" width="10" height="25" fill="#fff" stroke="#000"/><rect x="605" y="293" width="1" height="56" fill="#000"/><rect x="600.5" y="308.5" width="10" height="16" fill="#fff" stroke="#000"/><rect x="621" y="258" width="1" height="77" fill="#000"/><rect x="616.5" y="258.5" width="10" height="51" fill="#fff" stroke="#000"/><rect x="637" y="214" width="1" height="50" fill="#000"/><rect x="632.5" y="243.5" width="10" height="11" fill="#fff" stroke="#000"/><rect x="653" y="213" width="1" height="80" fill="#000"/><rect x="648" y="248" width="11" height="25" fill="#000"/><rect x="669" y="179" width="1" height="101" fill="#000"/><rect x="664.5" y="240.5" width="10" height="32" fill="#fff" stroke="#000"/><rect x="685" y="210" width="1" height="101" fill="#000"/><rect x="680" y="236" width="11" height="73" fill="#000"/><rect x="701" y="265" width="1" height="63" fill="#000"/><rect x="696.5" y="274.5" width="10" height="31" fill="#fff" stroke="#000"/><rect x="717" y="260" width="1" height="78" fill="#000"/><rect x="712" y="269" width="11" height="59" fill="#000"/><rect x="733" y="244" width="1" height="98" fill="#000"/><rect x="728.5" y="271.5" width="10" height="58" fill="#fff" stroke="#000"/><rect x="749" y="253" width="1" height="101" fill="#000"/><rect x="744" y="270" width="11" height="80" fill="#000"/><rect x="765" y="284" width="1" height="70" fill="#000"/><rect x="760.5" y="287.5" width="10" height="65" fill="#fff" stroke="#000"/><rect x="781" y="255" width="1" height="65" fill="#000"/><rect x="776.5" y="264.5" width="10" height="32" fill="#fff" stroke="#000"/><rect x="797" y="229" width="1" height="38" fill="#000"/><rect x="792.5" y="245.5" width="10" height="11" fill="#fff" stroke="#000"/><rect x="813" y="209" width="1" height="77" fill="#000"/><rect x="808.5" y="218.5" width="10" height="28" fill="#fff" stroke="#000"/><rect x="829" y="170" width="1" height="88" fill="#000"/><rect x="824.5" y="187.5" width="10" height="49" fill="#fff" stroke="#000"/><rect x="845" y="148" width="1" height="58" fill="#000"/><rect x="840.5" y="171.5" width="10" height="17" fill="#fff" stroke="#000"/><rect x="861" y="156" width="1" height="85" fill="#000"/><rect x="856" y="171" width="11" height="51" fill="#000"/><rect x="877" y="186" width="1" height="73" fill="#000"/><rect x="872" y="218" width="11" height="17" fill="#000"/><rect x="893" y="210" width="1" height="63" fill="#000"/><rect x="888" y="234" width="11" height="26" fill="#000"/><rect x="909" y="174" width="1" height="90" fill="#000"/><rect x="904.5" y="183.5" width="10" height="79" fill="#fff" stroke="#000"/><rect x="925" y="191" width="1" height="32" fill="#000"/><rect x="920" y="200" width="11" height="15" fill="#000"/><rect x="941" y="195" width="1" height="31" fill="#000"/><rect x="936.5" y="204.5" width="10" height="9" fill="#fff" stroke="#000"/><rect x="957" y="181" width="1" height="48" fill="#000"/><rect x="952.5" y="188.5" width="10" height="12" fill="#fff" stroke="#000"/><rect x="973" y="137" width="1" height="105" fill="#000"/><rect x="968" y="183" width="11" height="54" fill="#000"/><rect x="989" y="229" width="1" height="53" fill="#000"/><rect x="984" y="238" width="11" height="26" fill="#000"/><rect x="1005" y="246" width="1" height="51" fill="#000"/><rect x="1000" y="263" width="11" height="28" fill="#000"/><rect x="1021" y="273" width="1" height="36" fill="#000"/><rect x="1016.5" y="288.5" width="10" height="5" fill="#fff" stroke="#000"/><rect x="1037" y="270" width="1" height="73" fill="#000"/><rect x="1032.5" y="285.5" width="10" height="2" fill="#fff" stroke="#000"/></g><path d="M12.5 109V676M12 109.5H1318M1317.5 109V676M12 675.5H1318" stroke="#000"/><rect x="1318" y="111" width="2" height="1" fill="#000"/><rect x="1318" y="144" width="2" height="1" fill="#000"/><rect x="1318" y="177" width="2" height="1" fill="#000"/><rect x="1318" y="210" width="2" height="1" fill="#000"/><rect x="1318" y="243" width="2" height="1" fill="#000"/><rect x="1318" y="276" width="2" height="1" fill="#000"/><rect x="1318" y="309" width="2" height="1" fill="#000"/><rect x="1318" y="342" width="2" height="1" fill="#000"/><rect x="1318" y="375" width="2" height="1" fill="#000"/><rect x="1318" y="408" width="2" height="1" fill="#000"/><rect x="1318" y="441" width="2" height="1" fill="#000"/><rect x="1318" y="474" width="2" height="1" fill="#000"/><rect x="1318" y="507" width="2" height="1" fill="#000"/><rect x="1318" y="540" width="2" height="1" fill="#000"/><rect x="1318" y="573" width="2" height="1" fill="#000"/><rect x="1318" y="606" width="2" height="1" fill="#000"/><rect x="1318" y="639" width="2" height="1" fill="#000"/><rect x="1318" y="672" width="2" height="1" fill="#000"/><rect x="13" y="676" width="1" height="3" fill="#000"/><rect x="77" y="676" width="1" height="3" fill="#000"/><rect x="141" y="676" width="1" height="3" fill="#000"/><rect x="205" y="676" width="1" height="3" fill="#000"/><rect x="269" y="676" width="1" height="3" fill="#000"/><rect x="333" y="676" width="1" height="3" fill="#000"/><rect x="397" y="676" width="1" height="3" fill="#000"/><rect x="461" y="676" width="1" height="3" fill="#000"/><rect x="525" y="676" width="1" height="3" fill="#000"/><rect x="589" y="676" width="1" height="3" fill="#000"/><rect x="653" y="676" width="1" height="3" fill="#000"/><rect x="717" y="676" width="1" height="3" fill="#000"/><rect x="781" y="676" width="1" height="3" fill="#000"/><rect x="845" y="676" width="1" height="3" fill="#000"/><rect x="909" y="676" width="1" height="3" fill="#000"/><rect x="973" y="676" width="1" height="3" fill="#000"/><rect x="1037" y="676" width="1" height="3" fill="#000"/><path d="M16 116H24L20 120.5Z" fill="#000" shape-rendering="auto"/></svg>
<span class="t" style="left:1323.5px;top:106px;font-size:9.8px;line-height:12px;color:#000;letter-spacing:-0.418px;text-rendering:geometricPrecision;-webkit-text-stroke:0.15px #000;">1.40540</span>
<span class="t" style="left:1323.5px;top:139px;font-size:9.8px;line-height:12px;color:#000;letter-spacing:-0.418px;text-rendering:geometricPrecision;-webkit-text-stroke:0.15px #000;">1.39760</span>
<span class="t" style="left:1323.5px;top:172px;font-size:9.8px;line-height:12px;color:#000;letter-spacing:-0.418px;text-rendering:geometricPrecision;-webkit-text-stroke:0.15px #000;">1.38980</span>
<span class="t" style="left:1323.5px;top:205px;font-size:9.8px;line-height:12px;color:#000;letter-spacing:-0.418px;text-rendering:geometricPrecision;-webkit-text-stroke:0.15px #000;">1.38200</span>
<span class="t" style="left:1323.5px;top:238px;font-size:9.8px;line-height:12px;color:#000;letter-spacing:-0.418px;text-rendering:geometricPrecision;-webkit-text-stroke:0.15px #000;">1.37400</span>
<span class="t" style="left:1323.5px;top:271px;font-size:9.8px;line-height:12px;color:#000;letter-spacing:-0.418px;text-rendering:geometricPrecision;-webkit-text-stroke:0.15px #000;">1.36620</span>
<span class="t" style="left:1323.5px;top:304px;font-size:9.8px;line-height:12px;color:#000;letter-spacing:-0.418px;text-rendering:geometricPrecision;-webkit-text-stroke:0.15px #000;">1.35840</span>
<span class="t" style="left:1323.5px;top:337px;font-size:9.8px;line-height:12px;color:#000;letter-spacing:-0.418px;text-rendering:geometricPrecision;-webkit-text-stroke:0.15px #000;">1.35040</span>
<span class="t" style="left:1323.5px;top:370px;font-size:9.8px;line-height:12px;color:#000;letter-spacing:-0.418px;text-rendering:geometricPrecision;-webkit-text-stroke:0.15px #000;">1.34260</span>
<span class="t" style="left:1323.5px;top:403px;font-size:9.8px;line-height:12px;color:#000;letter-spacing:-0.418px;text-rendering:geometricPrecision;-webkit-text-stroke:0.15px #000;">1.33480</span>
<span class="t" style="left:1323.5px;top:436px;font-size:9.8px;line-height:12px;color:#000;letter-spacing:-0.418px;text-rendering:geometricPrecision;-webkit-text-stroke:0.15px #000;">1.32700</span>
<span class="t" style="left:1323.5px;top:469px;font-size:9.8px;line-height:12px;color:#000;letter-spacing:-0.418px;text-rendering:geometricPrecision;-webkit-text-stroke:0.15px #000;">1.31900</span>
<span class="t" style="left:1323.5px;top:502px;font-size:9.8px;line-height:12px;color:#000;letter-spacing:-0.314px;text-rendering:geometricPrecision;-webkit-text-stroke:0.15px #000;">1.31120</span>
<span class="t" style="left:1323.5px;top:535px;font-size:9.8px;line-height:12px;color:#000;letter-spacing:-0.418px;text-rendering:geometricPrecision;-webkit-text-stroke:0.15px #000;">1.30340</span>
<span class="t" style="left:1323.5px;top:568px;font-size:9.8px;line-height:12px;color:#000;letter-spacing:-0.418px;text-rendering:geometricPrecision;-webkit-text-stroke:0.15px #000;">1.29560</span>
<span class="t" style="left:1323.5px;top:601px;font-size:9.8px;line-height:12px;color:#000;letter-spacing:-0.418px;text-rendering:geometricPrecision;-webkit-text-stroke:0.15px #000;">1.28760</span>
<span class="t" style="left:1323.5px;top:634px;font-size:9.8px;line-height:12px;color:#000;letter-spacing:-0.418px;text-rendering:geometricPrecision;-webkit-text-stroke:0.15px #000;">1.27980</span>
<span class="t" style="left:1323.5px;top:667px;font-size:9.8px;line-height:12px;color:#000;letter-spacing:-0.418px;text-rendering:geometricPrecision;-webkit-text-stroke:0.15px #000;">1.27200</span>
<div class="r" style="left:1319px;top:279px;width:41px;height:11px;background:#000;"></div>
<span class="t" style="left:1323.5px;top:280px;font-size:9.8px;line-height:12px;color:#fff;letter-spacing:-0.418px;text-rendering:geometricPrecision;-webkit-text-stroke:0.15px #fff;">1.36418</span>
<span class="t" style="left:12.5px;top:680px;font-size:9.8px;line-height:12px;color:#000;letter-spacing:-0.366px;text-rendering:geometricPrecision;-webkit-text-stroke:0.15px #000;">10 Mar 2013</span>
<span class="t" style="left:76.5px;top:680px;font-size:9.8px;line-height:12px;color:#000;letter-spacing:-0.347px;text-rendering:geometricPrecision;-webkit-text-stroke:0.15px #000;">7 Apr 2013</span>
<span class="t" style="left:140.5px;top:680px;font-size:9.8px;line-height:12px;color:#000;letter-spacing:-0.375px;text-rendering:geometricPrecision;-webkit-text-stroke:0.15px #000;">5 May 2013</span>
<span class="t" style="left:204.5px;top:680px;font-size:9.8px;line-height:12px;color:#000;letter-spacing:-0.355px;text-rendering:geometricPrecision;-webkit-text-stroke:0.15px #000;">2 Jun 2013</span>
<span class="t" style="left:268.5px;top:680px;font-size:9.8px;line-height:12px;color:#000;letter-spacing:-0.359px;text-rendering:geometricPrecision;-webkit-text-stroke:0.15px #000;">30 Jun 2013</span>
<span class="t" style="left:332.5px;top:680px;font-size:9.8px;line-height:12px;color:#000;letter-spacing:-0.337px;text-rendering:geometricPrecision;-webkit-text-stroke:0.15px #000;">28 Jul 2013</span>
<span class="t" style="left:396.5px;top:680px;font-size:9.8px;line-height:12px;color:#000;letter-spacing:-0.366px;text-rendering:geometricPrecision;-webkit-text-stroke:0.15px #000;">25 Aug 2013</span>
<span class="t" style="left:460.5px;top:680px;font-size:9.8px;line-height:12px;color:#000;letter-spacing:-0.370px;text-rendering:geometricPrecision;-webkit-text-stroke:0.15px #000;">22 Sep 2013</span>
<span class="t" style="left:524.5px;top:680px;font-size:9.8px;line-height:12px;color:#000;letter-spacing:-0.355px;text-rendering:geometricPrecision;-webkit-text-stroke:0.15px #000;">20 Oct 2013</span>
<span class="t" style="left:588.5px;top:680px;font-size:9.8px;line-height:12px;color:#000;letter-spacing:-0.370px;text-rendering:geometricPrecision;-webkit-text-stroke:0.15px #000;">17 Nov 2013</span>
<span class="t" style="left:652.5px;top:680px;font-size:9.8px;line-height:12px;color:#000;letter-spacing:-0.370px;text-rendering:geometricPrecision;-webkit-text-stroke:0.15px #000;">15 Dec 2013</span>
<span class="t" style="left:716.5px;top:680px;font-size:9.8px;line-height:12px;color:#000;letter-spacing:-0.359px;text-rendering:geometricPrecision;-webkit-text-stroke:0.15px #000;">12 Jan 2014</span>
<span class="t" style="left:780.5px;top:680px;font-size:9.8px;line-height:12px;color:#000;letter-spacing:-0.363px;text-rendering:geometricPrecision;-webkit-text-stroke:0.15px #000;">9 Feb 2014</span>
<span class="t" style="left:844.5px;top:680px;font-size:9.8px;line-height:12px;color:#000;letter-spacing:-0.363px;text-rendering:geometricPrecision;-webkit-text-stroke:0.15px #000;">9 Mar 2014</span>
<span class="t" style="left:908.5px;top:680px;font-size:9.8px;line-height:12px;color:#000;letter-spacing:-0.347px;text-rendering:geometricPrecision;-webkit-text-stroke:0.15px #000;">6 Apr 2014</span>
<span class="t" style="left:972.5px;top:680px;font-size:9.8px;line-height:12px;color:#000;letter-spacing:-0.375px;text-rendering:geometricPrecision;-webkit-text-stroke:0.15px #000;">4 May 2014</span>
<span class="t" style="left:1036.5px;top:680px;font-size:9.8px;line-height:12px;color:#000;letter-spacing:-0.355px;text-rendering:geometricPrecision;-webkit-text-stroke:0.15px #000;">1 Jun 2014</span>
<div class="r" style="left:28px;top:112px;width:221px;height:11px;background:#fff;"></div>
<span class="t" style="left:28.5px;top:113px;font-size:9.8px;line-height:12px;color:#000;letter-spacing:-0.269px;text-rendering:geometricPrecision;-webkit-text-stroke:0.15px #000;">EURUSD,Weekly  1.36367 1.36766 1.35028 1.36418</span>
<div class="r" style="left:13px;top:183px;width:88px;height:10px;background:#fff;"></div>
<span class="t" style="left:20px;top:183px;font-size:9.8px;line-height:12px;color:#000;letter-spacing:-0.201px;text-rendering:geometricPrecision;-webkit-text-stroke:0.15px #000;">#1820376 buy 0.20</span>
<div class="r" style="left:13px;top:187px;width:88px;height:10px;background:#fff;"></div>
<span class="t" style="left:20px;top:187px;font-size:9.8px;line-height:12px;color:#000;letter-spacing:-0.201px;text-rendering:geometricPrecision;-webkit-text-stroke:0.15px #000;">#1820819 buy 0.20</span>
<div class="r" style="left:13px;top:225px;width:88px;height:10px;background:#fff;"></div>
<span class="t" style="left:20px;top:225px;font-size:9.8px;line-height:12px;color:#000;letter-spacing:-0.201px;text-rendering:geometricPrecision;-webkit-text-stroke:0.15px #000;">#1861484 buy 0.20</span>
<div class="r" style="left:13px;top:226px;width:9px;height:1px;background:#ff0000;"></div><div class="r" style="left:28px;top:226px;width:3px;height:1px;background:#ff0000;"></div><div class="r" style="left:37px;top:226px;width:9px;height:1px;background:#ff0000;"></div><div class="r" style="left:52px;top:226px;width:3px;height:1px;background:#ff0000;"></div><div class="r" style="left:61px;top:226px;width:9px;height:1px;background:#ff0000;"></div><div class="r" style="left:76px;top:226px;width:3px;height:1px;background:#ff0000;"></div><div class="r" style="left:85px;top:226px;width:9px;height:1px;background:#ff0000;"></div><div class="r" style="left:100px;top:226px;width:3px;height:1px;background:#ff0000;"></div>
<div class="r" style="left:13px;top:216px;width:60px;height:10px;background:#fff;"></div>
<span class="t" style="left:20px;top:216px;font-size:9.8px;line-height:12px;color:#000;letter-spacing:-0.227px;text-rendering:geometricPrecision;-webkit-text-stroke:0.15px #000;">#1861484 tp</span>
<div class="r" style="left:13px;top:231px;width:88px;height:10px;background:#fff;"></div>
<span class="t" style="left:20px;top:231px;font-size:9.8px;line-height:12px;color:#000;letter-spacing:-0.201px;text-rendering:geometricPrecision;-webkit-text-stroke:0.15px #000;">#1866428 buy 0.20</span>
<div class="r" style="left:13px;top:240px;width:9px;height:1px;background:#ff0000;"></div><div class="r" style="left:28px;top:240px;width:3px;height:1px;background:#ff0000;"></div><div class="r" style="left:37px;top:240px;width:9px;height:1px;background:#ff0000;"></div><div class="r" style="left:52px;top:240px;width:3px;height:1px;background:#ff0000;"></div><div class="r" style="left:61px;top:240px;width:9px;height:1px;background:#ff0000;"></div><div class="r" style="left:76px;top:240px;width:3px;height:1px;background:#ff0000;"></div><div class="r" style="left:85px;top:240px;width:9px;height:1px;background:#ff0000;"></div><div class="r" style="left:100px;top:240px;width:3px;height:1px;background:#ff0000;"></div>
<div class="r" style="left:13px;top:230px;width:60px;height:10px;background:#fff;"></div>
<span class="t" style="left:20px;top:230px;font-size:9.8px;line-height:12px;color:#000;letter-spacing:-0.227px;text-rendering:geometricPrecision;-webkit-text-stroke:0.15px #000;">#1866428 tp</span>
<div class="r" style="left:13px;top:251px;width:88px;height:10px;background:#fff;"></div>
<span class="t" style="left:20px;top:251px;font-size:9.8px;line-height:12px;color:#000;letter-spacing:-0.201px;text-rendering:geometricPrecision;-webkit-text-stroke:0.15px #000;">#1932908 buy 0.20</span>
<div class="r" style="left:13px;top:278px;width:86px;height:10px;background:#fff;"></div>
<span class="t" style="left:20px;top:278px;font-size:9.8px;line-height:12px;color:#000;letter-spacing:-0.268px;text-rendering:geometricPrecision;-webkit-text-stroke:0.15px #000;">#2055501 sell 0.20</span>
<div class="r" style="left:13px;top:267px;width:86px;height:10px;background:#fff;"></div>
<span class="t" style="left:20px;top:267px;font-size:9.8px;line-height:12px;color:#000;letter-spacing:-0.268px;text-rendering:geometricPrecision;-webkit-text-stroke:0.15px #000;">#2056906 sell 0.20</span>
<div class="r" style="left:13px;top:284px;width:60px;height:10px;background:#fff;"></div>
<span class="t" style="left:20px;top:284px;font-size:9.8px;line-height:12px;color:#000;letter-spacing:-0.227px;text-rendering:geometricPrecision;-webkit-text-stroke:0.15px #000;">#2056906 tp</span>
</body></html>
